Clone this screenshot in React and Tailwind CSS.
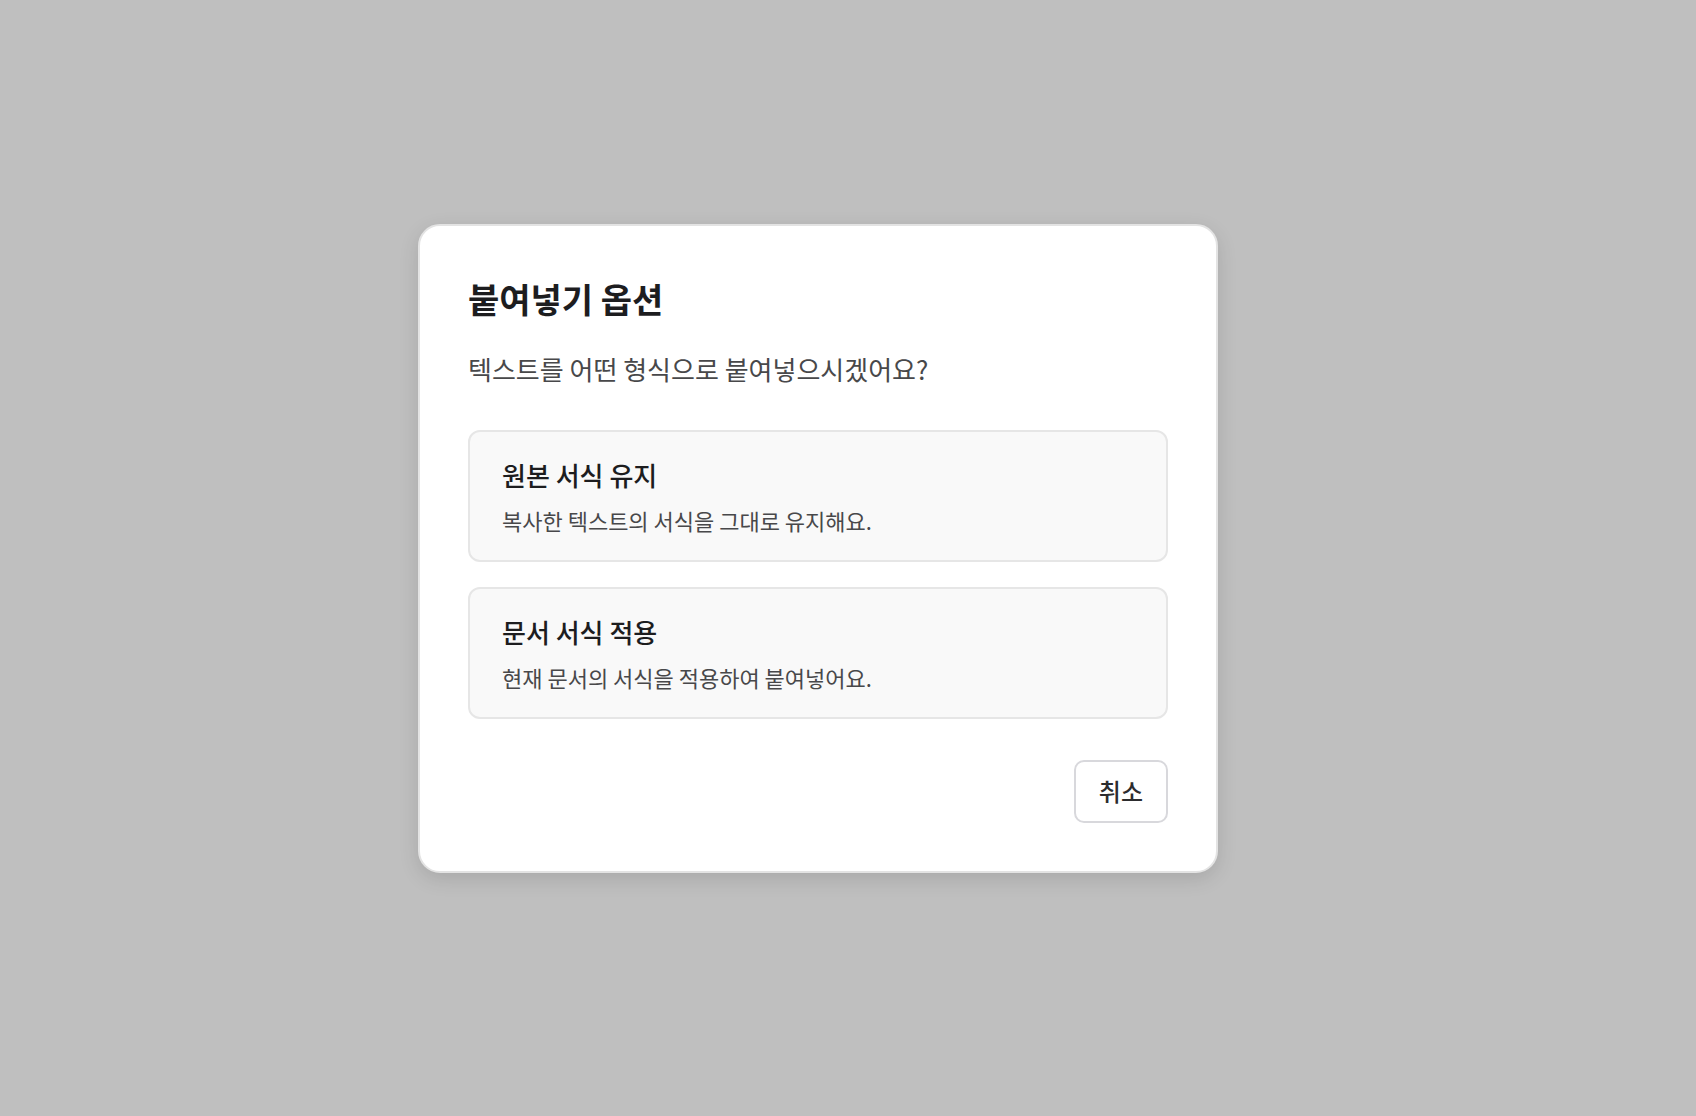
export default function App() {
  const font = { fontFamily: '"Noto Sans CJK KR", "Noto Sans", sans-serif' };
  return (
    <div
      className="w-full h-screen bg-[#bfbfbf] flex items-center justify-center pr-[60px] pb-[20px]"
      style={font}
    >
      <div className="w-[800px] bg-white border-2 border-[#e3e3e3] rounded-[22px] shadow-[0_6px_20px_rgba(0,0,0,0.12)] p-[48px] flex flex-col">
        <h1 className="text-[34px] leading-[50px] font-bold text-[#1d1d1f]">붙여넣기 옵션</h1>
        <p className="mt-[27px] text-[26px] leading-[36px] text-[#48484a]">
          텍스트를 어떤 형식으로 붙여넣으시겠어요?
        </p>
        <div className="mt-[43px] flex flex-col gap-[25px]">
          <div className="bg-[#f9f9f9] border-2 border-[#e6e6e6] rounded-[12px] px-[32px] h-[132px] flex flex-col justify-center">
            <div className="text-[26px] leading-[36px] font-medium text-[#1d1d1f]">원본 서식 유지</div>
            <div className="mt-[12px] text-[22px] leading-[30px] text-[#48484a]">
              복사한 텍스트의 서식을 그대로 유지해요.
            </div>
          </div>
          <div className="bg-[#f9f9f9] border-2 border-[#e6e6e6] rounded-[12px] px-[32px] h-[132px] flex flex-col justify-center">
            <div className="text-[26px] leading-[36px] font-medium text-[#1d1d1f]">문서 서식 적용</div>
            <div className="mt-[12px] text-[22px] leading-[30px] text-[#48484a]">
              현재 문서의 서식을 적용하여 붙여넣어요.
            </div>
          </div>
        </div>
        <div className="mt-[41px] flex justify-end">
          <button className="h-[63px] px-[23px] border-2 border-[#d8d8dc] rounded-[10px] bg-white text-[24px] font-medium text-[#2c2c2e]">
            취소
          </button>
        </div>
      </div>
    </div>
  );
}
